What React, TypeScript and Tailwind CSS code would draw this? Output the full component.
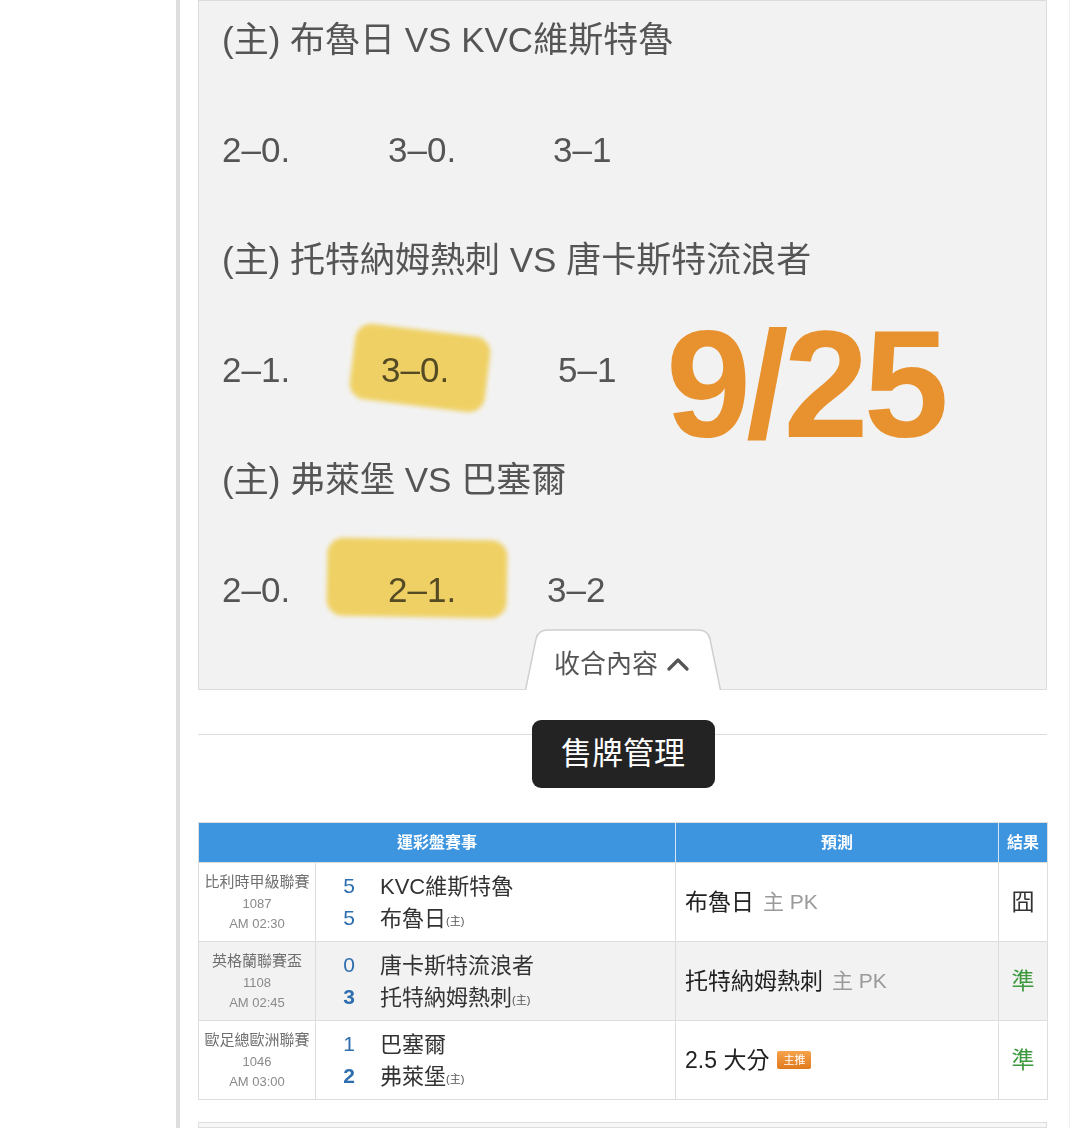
import React from "react";

const FONT = "font-['Liberation_Sans','Noto_Sans_CJK_TC',sans-serif]";

function Highlight({ className }: { className: string }) {
  return (
    <span
      className={`pointer-events-none absolute rounded-[16px] bg-[#fcd95a] opacity-90 mix-blend-multiply blur-[2px] ${className}`}
    />
  );
}

function MatchLine({ children }: { children: React.ReactNode }) {
  return <div className="flex h-[56px] items-center whitespace-pre">{children}</div>;
}

const rows = [
  {
    league: "比利時甲級聯賽",
    no: "1087",
    time: "AM 02:30",
    teams: [
      { s: "5", name: "KVC維斯特魯", home: false, bold: false },
      { s: "5", name: "布魯日", home: true, bold: false },
    ],
    pick: "布魯日",
    extra: "主 PK",
    badge: false,
    result: "囧",
    ok: false,
    bg: "bg-white",
  },
  {
    league: "英格蘭聯賽盃",
    no: "1108",
    time: "AM 02:45",
    teams: [
      { s: "0", name: "唐卡斯特流浪者", home: false, bold: false },
      { s: "3", name: "托特納姆熱刺", home: true, bold: true },
    ],
    pick: "托特納姆熱刺",
    extra: "主 PK",
    badge: false,
    result: "準",
    ok: true,
    bg: "bg-[#f2f2f2]",
  },
  {
    league: "歐足總歐洲聯賽",
    no: "1046",
    time: "AM 03:00",
    teams: [
      { s: "1", name: "巴塞爾", home: false, bold: false },
      { s: "2", name: "弗萊堡", home: true, bold: true },
    ],
    pick: "2.5 大分",
    extra: "",
    badge: true,
    result: "準",
    ok: true,
    bg: "bg-white",
  },
];

export default function App() {
  return (
    <div className={`h-[1128px] w-[1080px] overflow-hidden bg-white ${FONT}`}>
      <div className="ml-[176px] flex h-full w-[894px] flex-col border-l-[4px] border-r border-l-[#dedede] border-r-[#efefef] pl-[18px] pr-[21px]">
        {/* Gray content box */}
        <div className="relative h-[690px] w-[849px] shrink-0 border border-[#dcdcdc] bg-[#f2f2f2] pl-[23px] pt-[10px] text-[35px] leading-none text-[#555]">
          <div className="flex flex-col gap-[54px]">
            <MatchLine>(主) 布魯日 VS KVC維斯特魯</MatchLine>
            <MatchLine>
              <span className="w-[166px]">2–0.</span>
              <span className="w-[165px]">3–0.</span>
              <span>3–1</span>
            </MatchLine>
            <MatchLine>(主) 托特納姆熱刺 VS 唐卡斯特流浪者</MatchLine>
            <MatchLine>
              <span className="w-[159px]">2–1.</span>
              <span className="relative w-[177px]">
                3–0.
                <Highlight className="left-[-29px] top-[-22px] h-[76px] w-[136px] rotate-[7deg]" />
              </span>
              <span>5–1</span>
            </MatchLine>
            <MatchLine>(主) 弗萊堡 VS 巴塞爾</MatchLine>
            <MatchLine>
              <span className="w-[166px]">2–0.</span>
              <span className="relative w-[159px]">
                2–1.
                <Highlight className="left-[-61px] top-[-33px] h-[78px] w-[180px] rotate-[1deg]" />
              </span>
              <span>3–2</span>
            </MatchLine>
          </div>

          {/* Handwritten date annotation */}
          <div className="absolute left-[467px] top-[306px] text-[153px] font-bold leading-none tracking-[-5px] text-[#e8922f]">
            9/25
          </div>

          {/* Collapse tab */}
          <div className="absolute bottom-[-1px] left-[326px] h-[61px] w-[196px]">
            <svg className="absolute inset-0" width="196" height="61" viewBox="0 0 196 61">
              <path
                d="M0.5 61 L11 10 Q13 1 23 1 L173 1 Q183 1 185 10 L195.5 61 Z"
                fill="#ffffff"
                stroke="none"
              />
              <path
                d="M0.5 61 L11 10 Q13 1 23 1 L173 1 Q183 1 185 10 L195.5 61"
                fill="none"
                stroke="#cfcfcf"
                strokeWidth="1.5"
              />
            </svg>
            <div className="relative flex h-full items-center pl-[29px] pt-[8px] text-[26px] text-[#555]">
              <span>收合內容</span>
              <svg className="ml-[9px]" width="22" height="14" viewBox="0 0 22 14">
                <polyline points="2,12 11,3 20,12" fill="none" stroke="#555" strokeWidth="3.2" strokeLinecap="round" strokeLinejoin="round" />
              </svg>
            </div>
          </div>
        </div>

        {/* Divider with title */}
        <div className="mt-[44px] w-[849px] border-t border-[#dddddd]" />
        <div className="relative -mt-[15px] flex justify-center">
          <div className="flex h-[68px] w-[183px] items-center justify-center rounded-[9px] bg-[#232323] text-[31px] text-white">
            售牌管理
          </div>
        </div>

        {/* Table */}
        <table className="mt-[34px] w-[849px] table-fixed border-collapse border border-[#dddddd]">
          <colgroup>
            <col className="w-[117px]" />
            <col className="w-[360px]" />
            <col className="w-[323px]" />
            <col className="w-[49px]" />
          </colgroup>
          <thead>
            <tr className="h-[40px] bg-[#3d95df] text-[16px] font-bold text-white">
              <th colSpan={2} className="border-r border-[#d8e6f3]">運彩盤賽事</th>
              <th className="border-r border-[#d8e6f3]">預測</th>
              <th>結果</th>
            </tr>
          </thead>
          <tbody>
            {rows.map((r, i) => (
              <tr key={i} className={`h-[79px] ${r.bg} border-t border-[#dddddd]`}>
                <td className="border-r border-[#dddddd] text-center">
                  <div className="text-[15px] leading-[21px] text-[#6f6f6f]">{r.league}</div>
                  <div className="mt-[1px] text-[13px] leading-[21px] text-[#8a8a8a]">{r.no}</div>
                  <div className="text-[13px] leading-[20px] text-[#8a8a8a]">{r.time}</div>
                </td>
                <td className="border-r border-[#dddddd] pl-[21px]">
                  {r.teams.map((t, j) => (
                    <div key={j} className="flex h-[32px] items-center">
                      <span className={`w-[24px] text-center text-[21px] text-[#2f6eae] ${t.bold ? "font-bold" : ""}`}>{t.s}</span>
                      <span className="ml-[19px] text-[22px] text-[#333]">{t.name}</span>
                      {t.home && <span className="mt-[6px] text-[11px] text-[#555]">(主)</span>}
                    </div>
                  ))}
                </td>
                <td className="border-r border-[#dddddd] pl-[9px]">
                  <div className="flex items-center text-[23px] text-[#222]">
                    <span>{r.pick}</span>
                    {r.extra && <span className="ml-[9px] text-[21px] text-[#9a9a9a]">{r.extra}</span>}
                    {r.badge && (
                      <span className="ml-[8px] flex h-[18px] w-[34px] items-center justify-center rounded-[2px] bg-gradient-to-b from-[#f6a34a] to-[#e07a1c] text-[11px] leading-none text-white">
                        主推
                      </span>
                    )}
                  </div>
                </td>
                <td className={`text-center text-[23px] ${r.ok ? "text-[#3f9a3f]" : "text-[#333]"}`}>{r.result}</td>
              </tr>
            ))}
          </tbody>
        </table>

        {/* Next box (cut off) */}
        <div className="mt-[22px] h-[40px] w-[849px] border border-[#dddddd] bg-[#f7f7f7]" />
      </div>
    </div>
  );
}
